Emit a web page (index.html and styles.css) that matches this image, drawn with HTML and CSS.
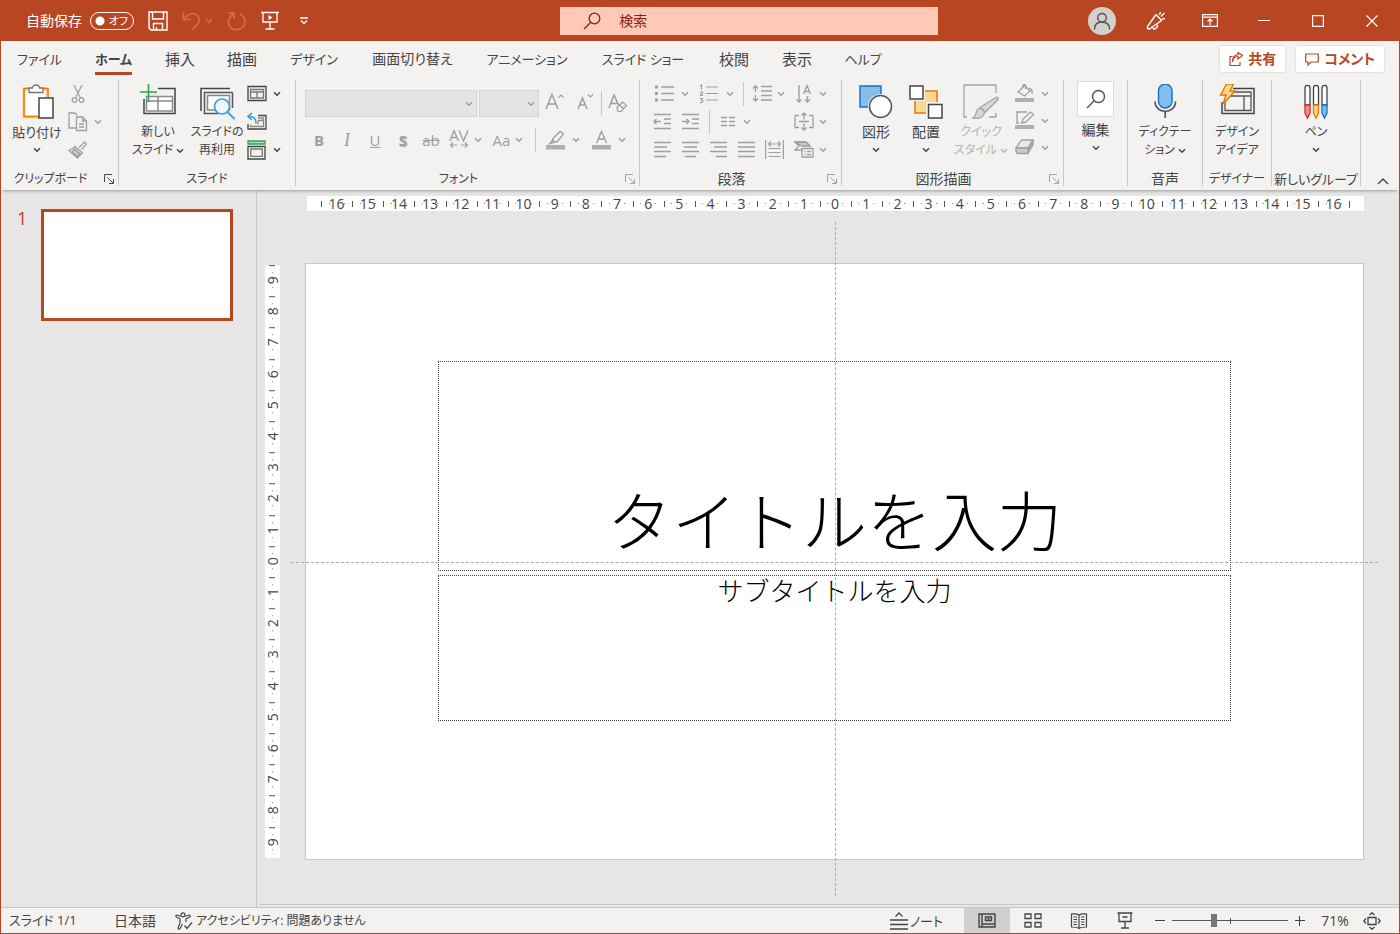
FILE: index.html
```html
<!DOCTYPE html>
<html lang="ja">
<head>
<meta charset="utf-8">
<meta name="viewport" content="width=device-width, initial-scale=1">
<title>プレゼンテーション</title>
<link rel="stylesheet" href="styles.css">
</head>
<body>
<svg class="defs" aria-hidden="true">
  <symbol id="chev" viewBox="0 0 8 6"><path d="M1 1.3l3 3 3-3" fill="none" stroke="currentColor" stroke-width="1.5"/></symbol>
  <symbol id="launch" viewBox="0 0 10 10"><path d="M.5 8V.5H8M3.5 3.5l5.5 5.500M9.500 5v4.500H5" fill="none" stroke="currentColor"/></symbol>
</svg>
<header class="titlebar">
  <div class="quick">
    <label class="autosave">自動保存
      <span class="switch"><input type="checkbox" role="switch"><span>オフ</span></span>
    </label>
    <button class="qbtn" aria-label="保存"><svg width="20" height="20" viewBox="0 0 20 20" fill="none" stroke="currentColor" stroke-width="1.4"><path d="M1 1h18v18H3l-2-2zM4.500 1v7h11V1M5.500 19v-6.500h9V19M8.500 19v-3"/></svg></button>
    <button class="qbtn dim" aria-label="元に戻す"><svg width="19" height="20" viewBox="0 0 19 20" fill="none" stroke="currentColor" stroke-width="1.600"><path d="M1.500 1.500v7h7M2 8c4-5 9-7 13-4 4 4 2 8-1 11l-4 4"/></svg><svg class="chev"><use href="#chev"/></svg></button>
    <button class="qbtn dim" aria-label="繰り返し"><svg width="20" height="20" viewBox="0 0 20 20" fill="none" stroke="currentColor" stroke-width="1.600"><path d="M1.500 2h5.500v5.500M7 3C0 6 0 14 5 17.500c6 3.500 13-1 13-7 0-4-2-6-5-8"/></svg></button>
    <button class="qbtn" aria-label="最初から開始"><svg width="18" height="19" viewBox="0 0 18 19" fill="none" stroke="currentColor" stroke-width="1.300"><path d="M0 1.500h18M2 2v9h14V2M9 11v6.500M4.500 18h9"/><path d="M7.500 4l4 2.500-4 2.500z" fill="currentColor" stroke="none"/></svg></button>
    <button class="qbtn more" aria-label="カスタマイズ"><svg width="10" height="8" viewBox="0 0 10 8" fill="none" stroke="currentColor" stroke-width="1.300"><path d="M1 1h8M2 3.500l3 3 3-3"/></svg></button>
  </div>
  <label class="search" aria-label="検索">
    <svg width="18" height="18" viewBox="0 0 18 18" fill="none" stroke="currentColor" stroke-width="1.300"><circle cx="11.500" cy="6.500" r="5.300"/><path d="M7.800 10.200L1 17"/></svg>
    <input type="search" placeholder="検索">
  </label>
  <div class="window">
    <button aria-label="アカウント"><span class="avatar"><svg width="18" height="18" viewBox="0 0 18 18" fill="none" stroke="currentColor" stroke-width="1.500"><circle cx="9" cy="5.800" r="4.300"/><path d="M1.500 17.500c0-5 3-7.500 7.500-7.500s7.500 2.500 7.500 7.500"/></svg></span></button>
    <button aria-label="新機能"><svg width="20" height="20" viewBox="0 0 20 20" fill="none" stroke="currentColor" stroke-width="1.400" stroke-linejoin="round"><path d="M10 3.500l5.500 6L3.500 18l-2-.5v-2L10 3.500M6.500 16l1.500 2.500 3.500-2.500-.5-2.500M13.500 4L14.500 1M15 5.500l3.500-3.500M16 8l3-.5"/></svg></button>
    <button aria-label="リボンの表示オプション"><svg width="16" height="13" viewBox="0 0 16 13" fill="none" stroke="currentColor" stroke-width="1.200"><path d="M.6.600h14.800v11.800H.6zM.6 3.200h14.800M8 11V5.500M5.500 7.500L8 5l2.500 2.500"/></svg></button>
    <button aria-label="最小化"><svg width="12" height="12" viewBox="0 0 12 12" stroke="currentColor"><path d="M0 5.500h12"/></svg></button>
    <button aria-label="最大化"><svg width="12" height="12" viewBox="0 0 12 12" fill="none" stroke="currentColor" stroke-width="1.200"><path d="M.6.600h10.800v10.800H.6z"/></svg></button>
    <button aria-label="閉じる"><svg width="12" height="12" viewBox="0 0 12 12" stroke="currentColor" stroke-width="1.200"><path d="M.5.500l11 11m0-11l-11 11"/></svg></button>
  </div>
</header>

<nav class="tabs">
  <div class="tablist">
    <button>ファイル</button><button class="active"><span>ホーム</span></button><button class="kanji">挿入</button><button class="kanji">描画</button><button>デザイン</button><button class="mixed">画面切り替え</button><button>アニメーション</button><button>スライド ショー</button><button class="kanji">校閲</button><button class="kanji">表示</button><button>ヘルプ</button>
  </div>
  <div class="actions">
    <button><svg width="14" height="14" viewBox="0 0 14 14" fill="none" stroke="currentColor" stroke-width="1.200"><path d="M3.500 4.500H1v9h10V10M3.500 10c.3-4 2.500-5.500 5.500-5.500V7l4.500-3.500L9 .5v2.200C5.500 3 3.500 6 3.500 10z"/></svg>共有</button>
    <button><svg width="14" height="13" viewBox="0 0 14 13" fill="none" stroke="currentColor" stroke-width="1.200"><path d="M.7 1h12.600v8H6l-3 3V9H.7z"/></svg>コメント</button>
  </div>
</nav>

<section class="ribbon">
  <div class="group clip">
    <div class="body">
      <button class="big mixed"><svg width="36" height="36" viewBox="0 0 34 36"><path d="M4 5h23v28H4z" fill="#fff" stroke="#fbd68a" stroke-width="3"/><path d="M11 4.500H4v28h15M21 4.500h7V13" fill="none" stroke="#e8770b" stroke-width="1.500"/><path d="M9 8.500V4h3.500C12.500 0 19.500 0 19.500 4H23v4.500z" fill="#fff" stroke="#777" stroke-width="1.300"/><path d="M19 14h14v20H19z" fill="#fff" stroke="#444" stroke-width="1.500"/></svg><span>貼り付け</span><svg class="chev"><use href="#chev"/></svg></button>
      <div class="stack off">
        <button class="row" aria-label="切り取り"><svg width="20" height="20" viewBox="0 0 20 20" fill="none" stroke="currentColor" stroke-width="1.300"><path d="M6 1l6.500 13M14 1L7.500 14"/><circle cx="6.500" cy="16" r="2.300"/><circle cx="13.500" cy="16" r="2.300"/></svg></button>
        <button class="row" aria-label="コピー"><svg width="20" height="20" viewBox="0 0 20 20" fill="none" stroke="currentColor" stroke-width="1.300"><path d="M8 16H1V1h6l2 2M8.500 5h6l4 4v9.500h-10zM14.500 5v4h4M11 12h5M11 15h5"/></svg><svg class="chev"><use href="#chev"/></svg></button>
        <button class="row" aria-label="書式のコピー"><svg width="20" height="20" viewBox="0 0 20 20" fill="none" stroke="currentColor" stroke-width="1.300"><path d="M11 7.500L16.500 2l2 2-5 5.500M7 6.500l7.500 6.500-2 1.500L5.500 8zM5.500 8L1 10.500 9.500 18l3-3.500" /><path d="M4 12l5.500 4.500L12 14 6.500 9z" fill="currentColor" fill-opacity=".45"/></svg></button>
      </div>
    </div>
    <div class="caption"><span>クリップボード</span><button aria-label="クリップボードの設定"><svg width="10" height="10"><use href="#launch"/></svg></button></div>
  </div>
  <div class="group slides">
    <div class="body">
      <button class="big"><svg width="36" height="36" viewBox="0 0 36 36" fill="none"><path d="M18 4.500h17v25H4V15" stroke="#444" stroke-width="1.500"/><path d="M6.500 12.500h26V27h-26zM18 12.500V27M6.500 17h26" fill="#fff" stroke="#8a8a8a" stroke-width="1.500"/><path d="M8.500 0v18M0 8h17" stroke="#2ea44f" stroke-width="1.600"/></svg><span>新しい<br>スライド <svg class="chev"><use href="#chev"/></svg></span></button>
      <button class="big"><svg width="36" height="36" viewBox="0 0 36 36" fill="none"><path d="M31 4.500H2V27" stroke="#444" stroke-width="1.500"/><path d="M33.500 8.500H5.500v21h14M33.500 8.500V24" stroke="#555" stroke-width="1.500"/><path d="M8.500 11.500h22V26h-22z" fill="#fff" stroke="#888" stroke-width="1.500"/><circle cx="23" cy="22.500" r="7.500" fill="#eef7fd" stroke="#3ba0dd" stroke-width="1.700"/><path d="M28.500 28l7 7" stroke="#3ba0dd" stroke-width="1.800"/></svg><span>スライドの<br>再利用</span></button>
      <div class="stack">
        <button class="row" aria-label="レイアウト"><svg width="20" height="20" viewBox="0 0 20 20" fill="none" stroke="#444" stroke-width="1.300"><path d="M1 2.500h18v14H1z"/><path d="M3.500 5.500h13v8.500h-13zM10 8v6M3.500 8h13" stroke="#777"/></svg><svg class="chev"><use href="#chev"/></svg></button>
        <button class="row" aria-label="リセット"><svg width="20" height="20" viewBox="0 0 20 20" fill="none" stroke="#444" stroke-width="1.300"><path d="M11 3.500h8V17H1v-5"/><path d="M11 6h5.500v8.500h-13V12.500M11 8.500h5M11 8.500v4" stroke="#888"/><path d="M5 1L1 4.500 5 8M1 4.500c6-.5 8 2 8 7" stroke="#3ba0dd" stroke-width="1.600"/></svg></button>
        <button class="row" aria-label="セクション"><svg width="20" height="20" viewBox="0 0 20 20" fill="none" stroke="#444" stroke-width="1.300"><path d="M1 1h17v3H1z" fill="#a8dcb5" stroke="#2ea44f"/><path d="M1 6.500h17V19H1z"/><path d="M3.800 9h11.500v7.300H3.800z" stroke="#777"/></svg><svg class="chev"><use href="#chev"/></svg></button>
      </div>
    </div>
    <div class="caption"><span>スライド</span></div>
  </div>
  <div class="group font">
    <div class="body lines off">
      <div class="line">
        <span class="combo wide"><select disabled aria-label="フォント"><option></option></select><svg class="chev"><use href="#chev"/></svg></span>
        <span class="combo"><select disabled aria-label="フォント サイズ"><option></option></select><svg class="chev"><use href="#chev"/></svg></span>
        <button class="sq" aria-label="フォント サイズの拡大"><svg width="20" height="20" viewBox="0 0 20 20" fill="none" stroke="currentColor" stroke-width="1.500"><path d="M1 16L7 1.500 13 16M3 11h8"/><path d="M13.500 4.500L16 2l2.500 2.500" stroke-width="1.200"/></svg></button>
        <button class="sq" aria-label="フォント サイズの縮小"><svg width="20" height="20" viewBox="0 0 20 20" fill="none" stroke="currentColor" stroke-width="1.500"><path d="M3 16L7.500 5 12 16M4.500 12h6"/><path d="M13 1.500L15.500 4 18 1.500" stroke-width="1.200"/></svg></button>
        <i class="bar tight"></i>
        <button class="sq" aria-label="書式のクリア"><svg width="20" height="20" viewBox="0 0 20 20" fill="none" stroke="currentColor" stroke-width="1.500"><path d="M1 15L6 2l4.500 10M3 10.500h6"/><path d="M9 14.500l5.500-5.500 4 3.500-5.500 6H10zM11.500 12l4 3.500" stroke-width="1.200"/></svg></button>
      </div>
      <div class="line second">
        <button class="sq"><b>B</b></button><button class="sq"><i class="serif">I</i></button><button class="sq"><u>U</u></button><button class="sq"><b class="shade">S</b></button><button class="sq"><s>ab</s></button>
        <button class="drop" aria-label="文字の間隔"><svg width="20" height="20" viewBox="0 0 20 20" fill="none" stroke="currentColor" stroke-width="1.400"><path d="M1 11L5 .5 9.500 11M2.500 7.500h6M10 .5L14.500 11 19 .5"/><path d="M4 12.500L1.500 15 4 17.500M1.500 15H8M16 12.500l2.500 2.500-2.500 2.500M18.500 15H12" stroke-width="1.200"/></svg><svg class="chev"><use href="#chev"/></svg></button>
        <button class="drop aa">Aa<svg class="chev"><use href="#chev"/></svg></button>
        <i class="bar"></i>
        <button class="drop spread" aria-label="蛍光ペン"><svg width="20" height="20" viewBox="0 0 20 20" fill="none" stroke="currentColor" stroke-width="1.400"><path d="M7 8.500l7-7 3.500 2.500-6.500 8H7.500zM7.500 9L4 13.500l5-1.500"/><path d="M0 15h19v4.500H0z" fill="#b1afad" stroke="none"/></svg><svg class="chev"><use href="#chev"/></svg></button>
        <button class="drop spread" aria-label="フォントの色"><svg width="20" height="20" viewBox="0 0 20 20" fill="none" stroke="currentColor" stroke-width="1.400"><path d="M4.500 13l5-11.500L14.500 13M6.500 9h6.500"/><path d="M0 15h19v4.500H0z" fill="#b1afad" stroke="none"/></svg><svg class="chev"><use href="#chev"/></svg></button>
      </div>
    </div>
    <div class="caption"><span>フォント</span><button class="off" aria-label="フォントの設定"><svg width="10" height="10"><use href="#launch"/></svg></button></div>
  </div>
  <div class="group para">
    <div class="body off">
      <div class="pgrid">
        <div class="prow">
          <button class="pd" aria-label="箇条書き"><svg width="20" height="20" viewBox="0 0 20 20" stroke="currentColor" stroke-width="1.300"><path d="M6 3h13M6 9.500h13M6 16h13"/><path d="M0 3h3M0 9.500h3M0 16h3" stroke-width="3"/></svg><svg class="chev"><use href="#chev"/></svg></button>
          <button class="pd" aria-label="段落番号"><svg width="20" height="20" viewBox="0 0 20 20" fill="none" stroke="currentColor" stroke-width="1.200"><path d="M6 3h12M6 9.500h12M6 16h12M0 2l1.500-1v4.500M0 8.500c2-1.500 3.500 0 2 1.500L0 11.500h3M0 14.500h2.500L1.500 16c2 0 2 3-1.500 2.500"/></svg><svg class="chev"><use href="#chev"/></svg></button>
          <i class="bar"></i>
          <button class="drop" aria-label="行間"><svg width="20" height="20" viewBox="0 0 20 20" fill="none" stroke="currentColor" stroke-width="1.300"><path d="M9 2.500h11M9 7h11M9 11.500h11M9 16h11M3.500 2v6M1 4.500L3.500 2 6 4.500M3.500 11v6M1 14.500L3.500 17 6 14.500"/></svg><svg class="chev"><use href="#chev"/></svg></button>
        </div>
        <button class="drop" aria-label="文字列の方向"><svg width="20" height="20" viewBox="0 0 20 20" fill="none" stroke="currentColor" stroke-width="1.400"><path d="M5 1v17M2.500 15.500L5 18l2.500-2.500M13.500 12v6M11 15.500l2.500 2.500 2.500-2.500M9.500 10l3.500-8.500L16.500 10M10.500 7.500h5"/></svg><svg class="chev"><use href="#chev"/></svg></button>
        <div class="prow">
          <button class="sq" aria-label="インデントを減らす"><svg width="20" height="20" viewBox="0 0 20 20" fill="none" stroke="currentColor" stroke-width="1.300"><path d="M1 2.500h17M11 7h7M11 11.500h7M1 16.500h17M8 9.500H1M3.500 7L1 9.500 3.500 12"/></svg></button>
          <button class="sq" aria-label="インデントを増やす"><svg width="20" height="20" viewBox="0 0 20 20" fill="none" stroke="currentColor" stroke-width="1.300"><path d="M1 2.500h17M11 7h7M11 11.500h7M1 16.500h17M1 9.500h7M5.500 7L8 9.500 5.500 12"/></svg></button>
          <i class="bar"></i>
          <button class="drop" aria-label="段組み"><svg width="20" height="20" viewBox="0 0 20 20" stroke="currentColor" stroke-width="1.300"><path d="M3 5.500h6M11 5.500h6M3 9.500h6M11 9.500h6M3 13.500h6M11 13.500h6"/></svg><svg class="chev"><use href="#chev"/></svg></button>
        </div>
        <button class="drop" aria-label="文字の配置"><svg width="20" height="20" viewBox="0 0 20 20" fill="none" stroke="currentColor" stroke-width="1.300"><path d="M5 3.500H1v12h4M15 3.500h4v12h-4M5 9.500h10M10 7.500V1M7.500 3.500L10 1l2.500 2.500M10 11.500V18M7.500 15.500L10 18l2.500-2.500"/></svg><svg class="chev"><use href="#chev"/></svg></button>
        <div class="prow">
          <button class="sq" aria-label="左揃え"><svg width="20" height="20" viewBox="0 0 20 20" stroke="currentColor" stroke-width="1.300"><path d="M1 2.500h17M1 7h13M1 11.500h17M1 16.500h12"/></svg></button>
          <button class="sq" aria-label="中央揃え"><svg width="20" height="20" viewBox="0 0 20 20" stroke="currentColor" stroke-width="1.300"><path d="M1 2.500h17M3 7h13M1 11.500h17M4 16.500h11"/></svg></button>
          <button class="sq" aria-label="右揃え"><svg width="20" height="20" viewBox="0 0 20 20" stroke="currentColor" stroke-width="1.300"><path d="M1 2.500h17M5 7h13M1 11.500h17M7 16.500h11"/></svg></button>
          <button class="sq" aria-label="両端揃え"><svg width="20" height="20" viewBox="0 0 20 20" stroke="currentColor" stroke-width="1.300"><path d="M1 2.500h17M1 7h17M1 11.500h17M1 16.500h17"/></svg></button>
          <button class="sq" aria-label="均等割り付け"><svg width="20" height="20" viewBox="0 0 20 20" fill="none" stroke="currentColor" stroke-width="1.200"><path d="M.6 0v19M18.400 0v19M3.500 8.500h12M3.500 12.500h12M3.500 16.500h12M3.500 4h12M6 1.500L3.500 4 6 6.500M13 1.500L15.500 4 13 6.500"/></svg></button>
        </div>
        <button class="drop" aria-label="SmartArt に変換"><svg width="20" height="20" viewBox="0 0 20 20" fill="none" stroke="currentColor" stroke-width="1.300"><path d="M9 10H1l4-4-4-4h11l4 4"/><path d="M1 2h11l4 4H8z" fill="currentColor" fill-opacity=".5"/><path d="M8 8.500h11v8.500H8zM10.500 11.500h1M13 11.500h4M10.500 14.500h1M13 14.500h4"/></svg><svg class="chev"><use href="#chev"/></svg></button>
      </div>
    </div>
    <div class="caption kanji"><span>段落</span><button class="off" aria-label="段落の設定"><svg width="10" height="10"><use href="#launch"/></svg></button></div>
  </div>
  <div class="group draw">
    <div class="body">
      <button class="big kanji"><svg width="36" height="36" viewBox="0 0 36 36"><path d="M2 2h21v21H2z" fill="#83beec" stroke="#1273c4" stroke-width="1.400"/><circle cx="22.500" cy="22.500" r="12.500" fill="#f3f2f1"/><circle cx="22.500" cy="22.500" r="11" fill="#fff" stroke="#555" stroke-width="1.500"/></svg><span>図形</span><svg class="chev"><use href="#chev"/></svg></button>
      <button class="big kanji"><svg width="36" height="36" viewBox="0 0 36 36"><path d="M7 7h22v22H7z" fill="#fbd98c" stroke="#e8770b" stroke-width="1.500"/><path d="M0 0h17v17H0zM18 18h18v18H18z" fill="#f3f2f1"/><path d="M2 2h13v13H2zM20.500 20.500H34V34H20.500z" fill="#fff" stroke="#444" stroke-width="1.500"/></svg><span>配置</span><svg class="chev"><use href="#chev"/></svg></button>
      <button class="big pale"><svg width="36" height="36" viewBox="0 0 36 36" fill="none" stroke="#a8a6a4" stroke-width="1.300"><path d="M4 33H1V1h32v8M33 29v4h-7"/><path d="M5 5h24v24H5z" fill="#f0f0f0" stroke="none"/><path d="M17 23.500L32 14c2-1.500 4-.500 3 1.500L22 28.500zM16.500 24c3 0 6 3 4.500 6-2 4-6 5-11 4 4-2 2-8 6.500-10z" fill="#d8d8d8"/></svg><span>クイック<br>スタイル <svg class="chev"><use href="#chev"/></svg></span></button>
      <div class="stack off">
        <button class="row" aria-label="図形の塗りつぶし"><svg width="20" height="20" viewBox="0 0 20 20" fill="none" stroke="currentColor" stroke-width="1.300"><path d="M3 8l6.500-6.500L15 7l-5.500 5zM8 4V1.500c0-1.500 2.500-1.500 2.500 0V5M14 4c3 1 3.500 3 3 6"/><path d="M0 14h19v4H0z" fill="#b1afad" stroke="none"/></svg><svg class="chev"><use href="#chev"/></svg></button>
        <button class="row" aria-label="図形の枠線"><svg width="20" height="20" viewBox="0 0 20 20" fill="none" stroke="currentColor" stroke-width="1.300"><path d="M12 1H2v11h2M8 8l7.500-7 3 2.500L11 11l-4.500 1z"/><path d="M0 14h19v4H0z" fill="#b1afad" stroke="none"/></svg><svg class="chev"><use href="#chev"/></svg></button>
        <button class="row" aria-label="図形の効果"><svg width="20" height="20" viewBox="0 0 20 20" stroke="currentColor" stroke-width="1.300" stroke-linejoin="round"><path d="M6.500 2H18l-5 8H1z" fill="#e8e8e8"/><path d="M1 10h12v5.500H2.500L1 14z" fill="#c8c8c8"/><path d="M18 2v5l-5 8.500V10z" fill="#aaa"/></svg><svg class="chev"><use href="#chev"/></svg></button>
      </div>
    </div>
    <div class="caption kanji"><span>図形描画</span><button class="off" aria-label="図形描画の設定"><svg width="10" height="10"><use href="#launch"/></svg></button></div>
  </div>
  <div class="group edit">
    <div class="body"><button class="big kanji"><span class="tile"><svg width="20" height="20" viewBox="0 0 20 20" fill="none" stroke="#555" stroke-width="1.500"><circle cx="12.500" cy="7.500" r="6"/><path d="M8 12l-7 7"/></svg></span><span>編集</span><svg class="chev"><use href="#chev"/></svg></button></div>
  </div>
  <div class="group voice">
    <div class="body"><button class="big"><svg width="36" height="36" viewBox="0 0 36 36" fill="none"><rect x="11.500" y="0" width="13.500" height="24" rx="6.700" fill="#83beec" stroke="#1273c4" stroke-width="1.400"/><path d="M8 17.500c0 13 20.500 13 20.500 0M18.200 27.500V34" stroke="#555" stroke-width="1.700"/></svg><span>ディクテー<br>ション <svg class="chev"><use href="#chev"/></svg></span></button></div>
    <div class="caption kanji"><span>音声</span></div>
  </div>
  <div class="group designer">
    <div class="body"><button class="big"><svg width="36" height="36" viewBox="0 0 36 36" fill="none"><path d="M14 4.500h21v25H3V18" stroke="#444" stroke-width="1.500"/><path d="M13 8h19v18.500H6V17M12 12h20M25 12v14.500" stroke="#555" stroke-width="1.300"/><path d="M7.500 0h7L11 7h5L4 20l3-9H1.500z" fill="#fbd98c" stroke="#e8770b" stroke-width="1.400"/></svg><span>デザイン<br>アイデア</span></button></div>
    <div class="caption"><span>デザイナー</span></div>
  </div>
  <div class="group pens">
    <div class="body"><button class="big"><svg width="36" height="36" viewBox="0 0 36 36" stroke-width="1.300"><g fill="#fff" stroke="#444"><path d="M7 21V4c0-3.500 5-3.500 5 0v17zM15.500 21V4c0-3.500 5-3.500 5 0v17zM24 21V4c0-3.500 5-3.500 5 0v17z"/></g><path d="M7 21h5v8l-2.500 5L7 29z" fill="#f58a8a" stroke="#e02b20"/><path d="M15.500 21h5v8L18 34l-2.500-5z" fill="#fbd98c" stroke="#e8770b"/><path d="M24 21h5v8l-2.500 5-2.500-5z" fill="#83beec" stroke="#1273c4"/></svg><span>ペン</span><svg class="chev"><use href="#chev"/></svg></button></div>
    <div class="caption"><span>新しいグループ</span></div>
  </div>
  <button class="collapse" aria-label="リボンを折りたたむ"><svg width="12" height="8" viewBox="0 0 12 8" fill="none" stroke="currentColor" stroke-width="1.400"><path d="M1 7l5-5 5 5"/></svg></button>
</section>

<main class="workspace">
  <aside class="thumbs"><span>1</span><button class="thumb" aria-label="スライド 1"></button></aside>
  <section class="canvas">
    <div class="ruler across"><span>16</span><span>15</span><span>14</span><span>13</span><span>12</span><span>11</span><span>10</span><span>9</span><span>8</span><span>7</span><span>6</span><span>5</span><span>4</span><span>3</span><span>2</span><span>1</span><span>0</span><span>1</span><span>2</span><span>3</span><span>4</span><span>5</span><span>6</span><span>7</span><span>8</span><span>9</span><span>10</span><span>11</span><span>12</span><span>13</span><span>14</span><span>15</span><span>16</span></div>
    <div class="ruler down"><span>9</span><span>8</span><span>7</span><span>6</span><span>5</span><span>4</span><span>3</span><span>2</span><span>1</span><span>0</span><span>1</span><span>2</span><span>3</span><span>4</span><span>5</span><span>6</span><span>7</span><span>8</span><span>9</span></div>
    <article class="slide">
      <h1 class="holder title">タイトルを入力</h1>
      <p class="holder subtitle">サブタイトルを入力</p>
      <i class="guide vertical"></i><i class="guide horizontal"></i>
    </article>
  </section>
</main>

<footer class="status">
  <span class="page">スライド 1/1</span>
  <button class="lang">日本語</button>
  <button class="access"><svg width="18" height="18" viewBox="0 0 18 18" fill="none" stroke="currentColor" stroke-width="1.200"><circle cx="8" cy="2.800" r="2"/><path d="M5.500 4.500L2 3C.5 3 .5 5 2 5.500l3 1.300v4L3 16c0 1.500 1.500 1.500 2 .5l2.500-4.500M10.500 4.500L14 3c1.500 0 1.500 2 0 2.500l-3 1.300V10M9.500 13.500l2.500 3 5-6"/></svg>アクセシビリティ: 問題ありません</button>
  <div class="right">
    <button class="notes"><svg width="20" height="18" viewBox="0 0 20 18" fill="none" stroke="currentColor" stroke-width="1.300"><path d="M1 8h18M1 12.500h18M1 17h18M6.500 4.500L10 1l3.500 3.500"/></svg>ノート</button>
    <button class="view on" aria-label="標準"><svg width="18" height="15" viewBox="0 0 18 15" fill="none" stroke="currentColor" stroke-width="1.400"><path d="M1 1h16v13H1zM4 1v13M4 11h13M7.500 4h6v3.500h-6zM9.500 5.800h2"/></svg></button>
    <button class="view" aria-label="スライド一覧"><svg width="18" height="15" viewBox="0 0 18 15" fill="none" stroke="currentColor" stroke-width="1.300"><path d="M1 1h6v4.500H1zM11 1h6v4.500h-6zM1 9.500h6V14H1zM11 9.500h6V14h-6z"/></svg></button>
    <button class="view" aria-label="閲覧表示"><svg width="18" height="16" viewBox="0 0 18 16" fill="none" stroke="currentColor" stroke-width="1.200"><path d="M9 2C7 .5 4 1 1.500 1v13c3 0 6 0 7.500 1.500C10.500 14 13.500 14 16.500 14V1C14 1 11 .5 9 2zM9 2v13M3.500 4H7M3.500 6.500H7M3.500 9H7M3.500 11.500H7M11 4h3.500M11 6.500h3.500M11 9h3.500M11 11.500h3.500"/></svg></button>
    <button class="view" aria-label="スライド ショー"><svg width="16" height="17" viewBox="0 0 16 17" fill="none" stroke="currentColor" stroke-width="1.300"><path d="M.5 1h15M2 1v8.500h12V1M5.500 5h5M8 9.500V16M4 16h8"/></svg></button>
    <button class="zoomstep" aria-label="縮小"><svg width="10" height="10" viewBox="0 0 10 10" stroke="currentColor"><path d="M0 4.500h10"/></svg></button>
    <input class="zoom" type="range" min="10" max="190" value="74" aria-label="ズーム">
    <button class="zoomstep" aria-label="拡大"><svg width="10" height="10" viewBox="0 0 10 10" stroke="currentColor"><path d="M0 4.500h10M4.500 0v10"/></svg></button>
    <button class="percent">71%</button>
    <button class="fit" aria-label="ウィンドウに合わせる"><svg width="18" height="18" viewBox="0 0 18 18" fill="none" stroke="currentColor" stroke-width="1.300"><path d="M5 5.500h8v7H5zM6.500 3L9 .8 11.500 3M6.500 15L9 17.200 11.500 15M3 6.500L.8 9 3 11.500M15 6.500L17.200 9 15 11.500"/></svg></button>
  </div>
</footer>
</body>
</html>
```
FILE: styles.css
```css
:root {
  --brand: #b84623;
  --chrome: #f3f2f1;
  --ink: #444;
  --muted: #a19f9d;
  --line: #c8c6c4;
}

* { box-sizing: border-box; }

body {
  margin: 0;
  min-height: 100vh;
  display: flex;
  flex-direction: column;
  border: 1px solid var(--brand);
  border-top: 0;
  background: #e6e6e6;
  color: var(--ink);
  font: 14px/18px "Open Sans", "Noto Sans CJK JP", sans-serif;
  font-feature-settings: "palt";
}

button, input, select {
  font: inherit;
  font-feature-settings: inherit;
  color: inherit;
}

button {
  display: flex;
  align-items: center;
  justify-content: center;
  padding: 0;
  border: 0;
  background: none;
  white-space: nowrap;
}

svg { flex: none; }
.defs { display: none; }
.chev { width: 8px; height: 6px; }
.off { color: var(--muted); }

/* Title bar */
.titlebar {
  display: grid;
  grid-template-columns: 40fr 27fr 33fr;
  align-items: center;
  height: 41px;
  background: var(--brand);
  color: #fff;
}
.quick { display: flex; align-items: center; padding-left: 25px; }
.autosave { display: flex; align-items: center; gap: 8px; margin-right: 14px; }
.switch {
  position: relative;
  display: flex;
  align-items: center;
  font-size: 11px;
}
.switch input {
  appearance: none;
  width: 44px;
  height: 18px;
  margin: 0;
  border: 1px solid #fff;
  border-radius: 9px;
  background: radial-gradient(circle at 9px 8px, #fff 4px, transparent 5px);
}
.switch span { position: absolute; right: 6px; }
.qbtn { gap: 4px; margin-right: 14px; }
.qbtn.dim { color: #e4694a; }
.qbtn.more { margin-left: 6px; }
.search {
  display: flex;
  align-items: center;
  gap: 16px;
  height: 28px;
  padding-left: 23px;
  background: #ffc9b5;
  color: #8f1d14;
}
.search input {
  flex: 1;
  min-width: 0;
  border: 0;
  outline: 0;
  background: none;
}
.search input::placeholder { color: inherit; opacity: 1; }
.window { display: flex; justify-content: flex-end; }
.window button { width: 54px; height: 40px; }
.avatar {
  display: grid;
  place-items: center;
  width: 28px;
  height: 28px;
  border-radius: 50%;
  background: #d2d0ce;
  color: #555;
}

/* Tabs */
.tabs {
  display: flex;
  justify-content: space-between;
  height: 37px;
  background: var(--chrome);
}
.tablist {
  display: grid;
  grid-template-columns: 77px 71px 62px 62px 82px 115px 114px 118px 64px 62px 70px;
  padding-bottom: 1px;
  font-size: 13px;
}
.tablist .kanji { font-size: 15px; }
.tablist .mixed { font-size: 14px; }
.tablist .active { font-weight: 700; }
.active span { padding-top: 6px; padding-bottom: 4px; border-bottom: 3px solid var(--brand); }
.actions { display: flex; gap: 11px; padding: 5px 15px 6px 0; }
.actions button {
  gap: 5px;
  padding: 0 9px;
  border-radius: 2px;
  background: #fff;
  box-shadow: 0 0 2px #bbb;
  color: var(--brand);
  font-weight: 700;
}

/* Ribbon */
.ribbon {
  display: flex;
  height: 112px;
  padding-top: 2px;
  background: var(--chrome);
  box-shadow: 0 3px 3px -2px #999;
  z-index: 1;
}
.group {
  display: flex;
  flex-direction: column;
  height: 106px;
  border-right: 1px solid var(--line);
}
.body { display: flex; flex: 1; padding-top: 4px; }
.caption { display: flex; align-items: center; height: 14px; font-size: 12px; }
.caption.kanji { font-size: 14px; }
.caption span { flex: 1; text-align: center; white-space: nowrap; }
.caption button { width: 18px; }
.clip { width: 118px; }
.slides { width: 177px; }
.font { width: 344px; }
.para { width: 202px; }
.draw { width: 222px; }
.edit { width: 64px; }
.voice { width: 75px; }
.designer { width: 69px; }
.pens { width: 89px; }
.pens .caption { font-size: 13px; }
.clip .body { padding-left: 11px; gap: 6px; }
.slides .body { padding-left: 10px; gap: 1px; }
.draw .body { padding-left: 9px; }
.edit .big, .voice .big, .designer .big, .pens .big { flex: 1; }

.big {
  flex-direction: column;
  justify-content: flex-start;
  font-size: 12px;
  line-height: 18px;
}
.big.mixed { font-size: 13px; }
.big.kanji { font-size: 14px; }
.big > svg:first-child { margin-bottom: 3px; }
.big > .chev { margin-top: 6px; }
.clip .big { width: 50px; }
.slides .big { width: 58px; }
.draw .big { width: 50px; }
.draw .big.pale { width: 60px; color: #b5b3b1; }
.tile {
  display: grid;
  place-items: center;
  width: 37px;
  height: 36px;
  border: 1px solid #ddd;
  background: #fff;
}
.edit .body { padding-top: 1px; }
.tile + span { margin-top: 4px; }

.stack { display: flex; flex-direction: column; gap: 8px; }
.row { gap: 6px; justify-content: flex-start; height: 20px; }
.draw .stack { gap: 7px; padding-left: 4px; }

.body.lines { flex-direction: column; padding: 9px 0 0 9px; }
.line { display: flex; align-items: center; gap: 2px; height: 28px; }
.line.second { gap: 0; height: 46px; }
.combo { position: relative; display: flex; width: 60px; }
.combo.wide { width: 172px; }
.combo select {
  appearance: none;
  width: 100%;
  height: 27px;
  border: 1px solid var(--line);
  border-radius: 0;
  background: #e1dfdd;
}
.combo .chev { position: absolute; right: 4px; top: 11px; }
.sq { width: 28px; height: 24px; font-size: 15px; }
.bar { width: 1px; height: 24px; margin: 0 4px; background: var(--line); }
.bar.tight { margin: 0; }
.serif { font-family: "Liberation Serif", serif; font-size: 18px; }
.shade { text-shadow: 1px 1px 1px #aaa; }
.drop { gap: 5px; width: 40px; height: 24px; }
.drop.aa { width: 46px; font-size: 15px; }
.drop.spread { width: 46px; gap: 6px; }

.pgrid {
  display: grid;
  grid-template-columns: 141px auto;
  grid-auto-rows: 28px;
  align-items: center;
  padding-left: 9px;
}
.para .body { padding-top: 0; }
.prow { display: flex; align-items: center; }
.pd { gap: 6px; width: 45px; }
.collapse { flex: 1; align-self: flex-end; height: 18px; padding-left: 6px; }

/* Workspace */
.workspace { flex: 1; display: flex; }
.thumbs {
  display: flex;
  align-items: flex-start;
  gap: 14px;
  width: 256px;
  padding: 19px 23px 0 16px;
  border-right: 1px solid var(--line);
  color: var(--brand);
  font-size: 18px;
}
.thumb {
  flex: 1;
  aspect-ratio: 192 / 112;
  border: 3px solid var(--brand);
  background: #fff;
}
.canvas {
  flex: 1;
  display: grid;
  grid-template-columns: 15px 1fr;
  grid-template-rows: 15px 1fr;
  gap: 52px 25px;
  margin: 0 0 2px 2px;
  padding: 6px 35px 44px 6px;
  border-bottom: 1px solid var(--line);
}
.ruler { display: flex; background: #fff; line-height: 15px; }
.ruler span { flex: 1 1 0; text-align: center; }
.across { grid-column: 2; padding: 0 14px; margin-left: 2px; }
.across span {
  background:
    linear-gradient(#555, #555) 0 50% / 1px 6px no-repeat,
    linear-gradient(#888, #888) 25% 50% / 1px 1px no-repeat,
    linear-gradient(#888, #888) 75% 50% / 1px 1px no-repeat;
}
.across span:last-child { border-right: 1px solid #555; border-image: linear-gradient(transparent 5px, #555 5px 11px, transparent 11px) 1; }
.down { flex-direction: column; margin: 2px 0; }
.down span {
  writing-mode: vertical-rl;
  transform: rotate(180deg);
  background:
    linear-gradient(#555, #555) 50% 100% / 6px 1px no-repeat,
    linear-gradient(#888, #888) 50% 25% / 1px 1px no-repeat,
    linear-gradient(#888, #888) 50% 75% / 1px 1px no-repeat;
}
.slide {
  position: relative;
  display: grid;
  grid-template-columns: 1fr 6fr 1fr;
  grid-template-rows: 97fr 210fr 4fr 146fr 138fr;
  border: 1px solid var(--line);
  background: #fff;
  color: #000;
}
.holder {
  grid-column: 2;
  display: flex;
  justify-content: center;
  margin: 0;
  border: 1px dotted #444;
  font-family: "Noto Sans CJK JP", sans-serif;
  font-feature-settings: normal;
  font-weight: 300;
}
.title { grid-row: 2; align-items: flex-end; font-size: 65px; line-height: 104px; }
.subtitle { grid-row: 4; font-size: 26px; line-height: 28px; }
.guide { position: absolute; }
.vertical { inset: -42px auto -37px 50%; border-left: 1px dashed #aaa; }
.horizontal { inset: 50% -15px auto -15px; border-top: 1px dashed #aaa; }

/* Status bar */
.status {
  display: flex;
  align-items: stretch;
  height: 26px;
  padding-left: 8px;
  border-top: 1px solid var(--line);
  background: var(--chrome);
}
.page { width: 105px; font-size: 13px; line-height: 25px; }
.lang { margin-right: 19px; }
.access { gap: 3px; font-size: 12px; }
.right { display: flex; margin-left: auto; }
.notes { gap: 1px; margin-right: 21px; font-size: 13px; }
.view { width: 46px; }
.view.on { background: #d2d0ce; }
.zoomstep { width: 24px; }
.zoom {
  appearance: none;
  align-self: center;
  width: 116px;
  height: 14px;
  margin: 0;
  background:
    linear-gradient(#555, #555) 50% 50% / 1px 6px no-repeat,
    linear-gradient(#555, #555) 50% 50% / 100% 1px no-repeat;
}
.zoom::-webkit-slider-thumb {
  appearance: none;
  width: 6px;
  height: 13px;
  background: #777;
}
.percent { width: 46px; }
.fit { width: 28px; margin-right: 13px; }
```
